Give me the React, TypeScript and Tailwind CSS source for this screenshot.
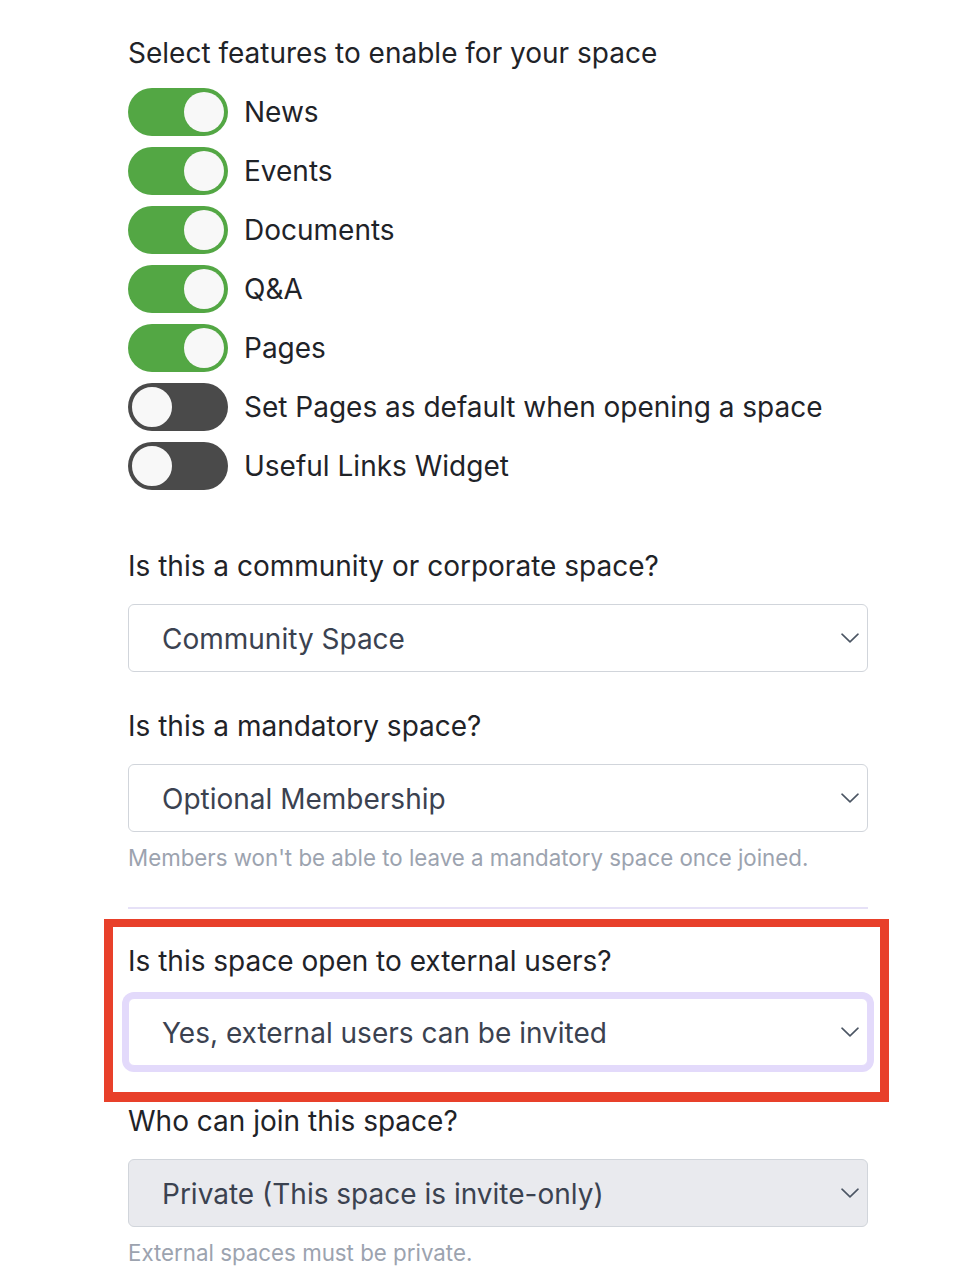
import React from "react";

const features = [
  { label: "News", on: true },
  { label: "Events", on: true },
  { label: "Documents", on: true },
  { label: "Q&A", on: true },
  { label: "Pages", on: true },
  { label: "Set Pages as default when opening a space", on: false },
  { label: "Useful Links Widget", on: false },
];

function Toggle({ on }: { on: boolean }) {
  return (
    <div
      className={
        on
          ? "flex h-[48px] w-[100px] shrink-0 items-center justify-end rounded-full bg-[#53a744] p-[4px]"
          : "flex h-[48px] w-[100px] shrink-0 items-center justify-start rounded-full bg-[#4a4a4a] p-[2px]"
      }
    >
      <div
        className={
          on
            ? "h-[40px] w-[40px] rounded-full bg-[#f8f8f8]"
            : "h-[44px] w-[44px] rounded-full border-[2px] border-[#4a4a4a] bg-[#f8f8f8]"
        }
      />
    </div>
  );
}

function Chevron() {
  return (
    <svg width="18" height="10" viewBox="0 0 18 10" fill="none" className="shrink-0">
      <path d="M1 1.2L9 8.8L17 1.2" stroke="#4b5563" strokeWidth="1.6" strokeLinecap="round" strokeLinejoin="round" />
    </svg>
  );
}

function Select({ value, disabled, focused }: { value: string; disabled?: boolean; focused?: boolean }) {
  return (
    <div
      className={
        "flex h-[68px] w-[740px] items-center justify-between rounded-[6px] border pl-[33px] pr-[8px] " +
        (disabled ? "border-[#d1d5db] bg-[#e9eaee] " : "border-[#d1d5db] bg-white ") +
        (focused ? "ring-[6px] ring-[#e3dafb] border-[#e3dafb]" : "")
      }
    >
      <span className="pt-[2px] text-[28px] text-[#3b4250]">{value}</span>
      <Chevron />
    </div>
  );
}

export default function App() {
  return (
    <div className="min-h-screen bg-white pl-[128px] pt-[34px] font-['Inter','Noto_Sans',sans-serif] text-[#1f2328]">
      <div className="w-[740px]">
        <p className="text-[28px] leading-[38px]">Select features to enable for your space</p>

        <div className="mt-[16px] flex flex-col gap-[11px]">
          {features.map((f) => (
            <div key={f.label} className="flex items-center gap-[16px]">
              <Toggle on={f.on} />
              <span className="text-[28px] leading-[38px]">{f.label}</span>
            </div>
          ))}
        </div>

        <p className="mt-[57px] text-[28px] leading-[38px]">Is this a community or corporate space?</p>
        <div className="mt-[19px]">
          <Select value="Community Space" />
        </div>

        <p className="mt-[35px] text-[28px] leading-[38px]">Is this a mandatory space?</p>
        <div className="mt-[19px]">
          <Select value="Optional Membership" />
        </div>
        <p className="mt-[11px] text-[22.3px] leading-[30px] text-[#9ca3af]">
          Members won't be able to leave a mandatory space once joined.
        </p>

        <div className="mt-[34px] border-t-2 border-[#e6e1f7]" />

        {/* highlighted section */}
        <div className="mt-[10px] -ml-[24px] -mr-[21px] border-[9px] border-t-[8px] border-b-[10px] border-[#e8402a] pb-[26px] pl-[15px] pr-[12px] pt-[15px]">
          <p className="text-[28px] leading-[38px]">Is this space open to external users?</p>
          <div className="mt-[18px]">
            <Select value="Yes, external users can be invited" focused />
          </div>
        </div>

        <p className="text-[28px] leading-[38px]">Who can join this space?</p>
        <div className="mt-[19px]">
          <Select value="Private (This space is invite-only)" disabled />
        </div>
        <p className="mt-[11px] text-[22.3px] leading-[30px] text-[#9ca3af]">External spaces must be private.</p>
      </div>
    </div>
  );
}
